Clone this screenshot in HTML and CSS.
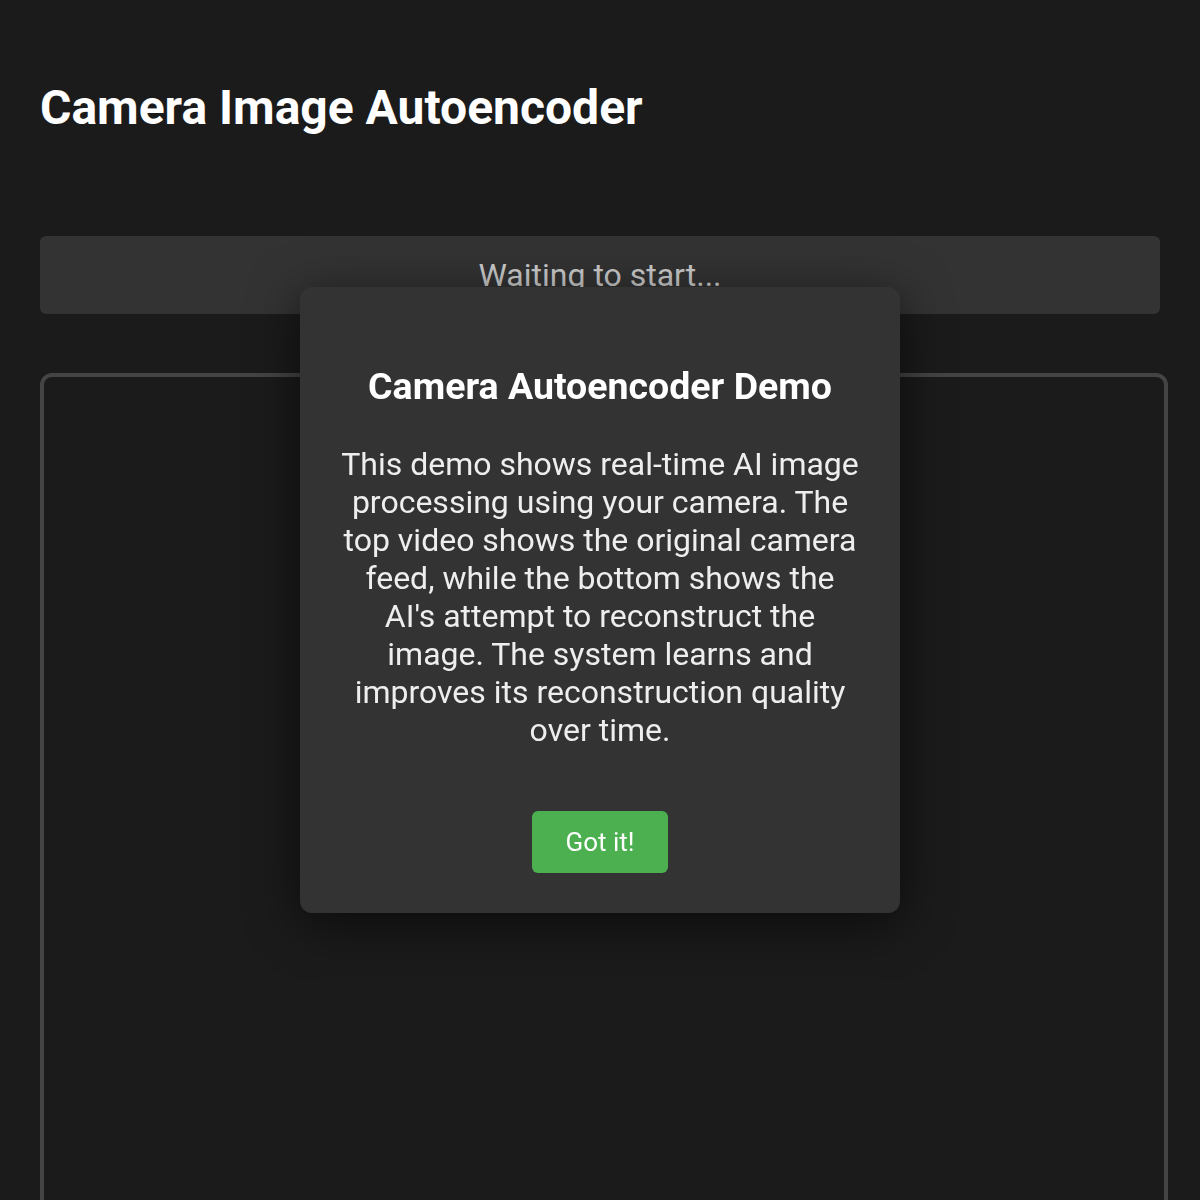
FILE: index.html
```html
<!DOCTYPE html>
<html lang="en">
<head>
  <meta charset="UTF-8" />
  <meta name="viewport" content="width=device-width, initial-scale=1.0" />
  <title>Camera Image Autoencoder</title>
  <link rel="stylesheet" href="styles.css">
</head>
<body>
<div class="container">
  <h1>Camera Image Autoencoder</h1>
  <div id="status" class="status">Waiting to start...</div>

  <!-- original feed + reconstruction -->
  <div class="video-box">
    <video id="inputVideo" autoplay muted playsinline></video>
    <canvas id="outputCanvas"></canvas>
  </div>
</div>

<!-- intro popup -->
<div id="introModal" class="modal">
  <h2>Camera Autoencoder Demo</h2>
  <p>This demo shows real-time AI image processing using your camera. The top video shows the original camera feed, while the bottom shows the AI's attempt to reconstruct the image. The system learns and improves its reconstruction quality over time.</p>
  <button onclick="closeModal()">Got it!</button>
</div>

<script>
  function closeModal() {
    document.getElementById("introModal").style.display = "none";
    document.getElementById("status").innerText = "Starting camera...";
  }
</script>
</body>
</html>
```

FILE: styles.css
```css
body { font-family: Roboto, "Noto Sans", sans-serif; background: #1b1b1b; color: #fff; margin: 0; padding: 40px; }
.container { max-width: 1120px; margin: 0 auto; }
h1 { font-size: 48px; margin: 39px 0 100px; }
.status { background: #333; color: #ccc; font-size: 32px; text-align: center; padding: 20px; border-radius: 6px; }
.video-box { width: 100%; height: 900px; margin-top: 59px; border: 4px solid #444; border-radius: 12px; }
.video-box video, .video-box canvas { display: none; }
.modal { position: fixed; top: 50%; left: 50%; transform: translate(-50%, -50%); width: 520px; padding: 40px; background: #333; border-radius: 12px; text-align: center; box-shadow: 0 10px 50px rgba(0,0,0,0.6); }
.modal h2 { font-size: 37.5px; margin: 37px 0 37px; }
.modal p { font-size: 32px; line-height: 38px; color: #eee; margin: 0 0 62px; }
.modal button { background: #4caf50; color: #fff; border: none; border-radius: 6px; font-family: inherit; font-size: 26px; padding: 16px 33px; cursor: pointer; }
```
